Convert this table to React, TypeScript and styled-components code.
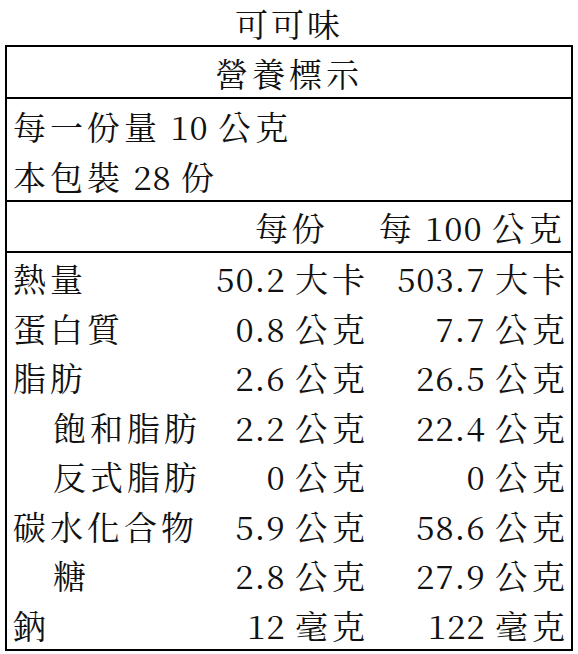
import { Fragment } from 'react';
import styled, { createGlobalStyle } from 'styled-components';

const GlobalStyle = createGlobalStyle`
  html, body {
    margin: 0;
    padding: 0;
    background: #fff;
  }

  body {
    font-family: "Noto Serif CJK TC", "Liberation Serif", "Noto Sans CJK TC", serif;
    color: #111;
  }
`;

const Page = styled.div`
  width: 578px;
  padding: 0 5px 2px;
  box-sizing: border-box;
`;

const Title = styled.h1`
  margin: 0;
  height: 45px;
  display: flex;
  align-items: center;
  justify-content: center;
  font-size: 33px;
  font-weight: 400;
  letter-spacing: 3px;
`;

const Label = styled.section`
  border: 2px solid #000;
`;

const Heading = styled.div`
  height: 50px;
  display: flex;
  align-items: center;
  justify-content: center;
  font-size: 33px;
  letter-spacing: 4px;
  border-bottom: 2px solid #000;
`;

const Serving = styled.div`
  padding: 1px 0 0 6px;
  border-bottom: 2px solid #000;
`;

const ServingLine = styled.div`
  height: 50px;
  display: flex;
  align-items: center;
  font-size: 33px;
  letter-spacing: 4px;
  word-spacing: -3px;
  white-space: pre;
`;

const Num = styled.span`
  letter-spacing: 1px;
`;

const Grid = styled.div<{ $header?: boolean }>`
  display: grid;
  grid-template-columns: 1fr 168px 200px;
  grid-auto-rows: ${({ $header }) => ($header ? '49px' : '49.5px')};
  padding: 0 5px 0 6px;
  border-bottom: ${({ $header }) => ($header ? '2px solid #000' : 'none')};
`;

const Cell = styled.div<{ $align?: 'left' | 'right'; $indent?: number; $pad?: number }>`
  display: flex;
  align-items: center;
  justify-content: ${({ $align }) => ($align === 'right' ? 'flex-end' : 'flex-start')};
  padding-left: ${({ $indent }) => $indent ?? 0}px;
  padding-right: ${({ $pad }) => $pad ?? 0}px;
  font-size: 33px;
  letter-spacing: 4px;
  word-spacing: -3px;
  white-space: pre;
`;

type Nutrient = {
  name: string;
  indent?: number;
  perServing: string;
  per100: string;
};

const nutrients: Nutrient[] = [
  { name: '熱量', perServing: '50.2 大卡', per100: '503.7 大卡' },
  { name: '蛋白質', perServing: '0.8 公克', per100: '7.7 公克' },
  { name: '脂肪', perServing: '2.6 公克', per100: '26.5 公克' },
  { name: '飽和脂肪', indent: 40, perServing: '2.2 公克', per100: '22.4 公克' },
  { name: '反式脂肪', indent: 40, perServing: '0 公克', per100: '0 公克' },
  { name: '碳水化合物', perServing: '5.9 公克', per100: '58.6 公克' },
  { name: '糖', indent: 40, perServing: '2.8 公克', per100: '27.9 公克' },
  { name: '鈉', perServing: '12 毫克', per100: '122 毫克' },
];

// digits get tighter tracking than the CJK characters around them
function Amount({ text }: { text: string }) {
  const [value, unit] = text.split(' ');
  return (
    <>
      <Num>{value}</Num>
      {` ${unit}`}
    </>
  );
}

export default function App() {
  return (
    <>
      <GlobalStyle />
      <Page>
        <Title>可可味</Title>
        <Label>
          <Heading>營養標示</Heading>
          <Serving>
            <ServingLine>每一份量 <Num>10</Num> 公克</ServingLine>
            <ServingLine>本包裝 <Num>28</Num> 份</ServingLine>
          </Serving>
          <Grid $header>
            <Cell />
            <Cell $align="right" $pad={37}>每份</Cell>
            <Cell $align="right">每 <Num>100</Num> 公克</Cell>
          </Grid>
          <Grid>
            {nutrients.map((n) => (
              <Fragment key={n.name}>
                <Cell $indent={n.indent}>{n.name}</Cell>
                <Cell $align="right"><Amount text={n.perServing} /></Cell>
                <Cell $align="right"><Amount text={n.per100} /></Cell>
              </Fragment>
            ))}
          </Grid>
        </Label>
      </Page>
    </>
  );
}
